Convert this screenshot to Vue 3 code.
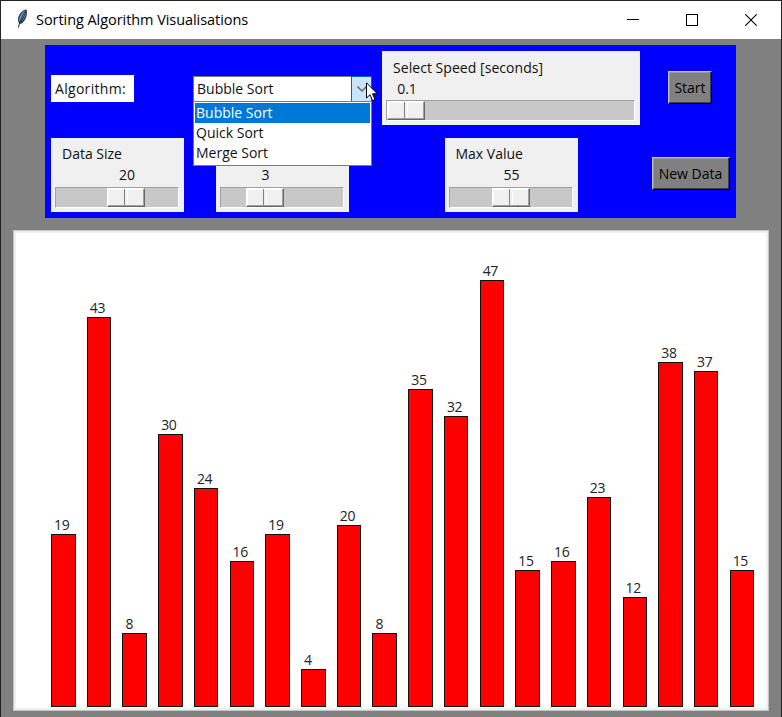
<script setup>
const values = [19, 43, 8, 30, 24, 16, 19, 4, 20, 8, 35, 32, 47, 15, 16, 23, 12, 38, 37, 15]
const unit = 9.045
const bars = values.map((value) => ({
  value,
  height: 707 - Math.round(705.5 - value * unit) + 'px',
}))
const algorithms = ['Bubble Sort', 'Quick Sort', 'Merge Sort']
const speed = { label: 'Select Speed [seconds]', value: '0.1', offset: '0px', cls: 'wide' }
const sliders = [
  { label: 'Data Size', value: '20', offset: '51px', cls: 'size' },
  { label: '', value: '3', offset: '25px', cls: 'min' },
  { label: 'Max Value', value: '55', offset: '42px', cls: 'max' },
]
</script>

<template>
  <div class="window">
    <header class="titlebar">
      <svg class="feather" width="13" height="20" viewBox="0 0 13 20">
        <path d="M3 19 L4.2 14.5 C2 11 3 7 6 3.5 C8 1.2 10 .3 11.5 .5 C12.5 3 12 8 9.5 11.5 C8 14 6.5 15 4.5 15 L3.5 19 Z" fill="#263d57" />
        <path d="M4.3 13.2 C3.4 9.5 5.2 6 9.2 1.8 L10.8 1.2 C9.6 5.3 7.5 10 4.3 13.2Z" fill="#7299c7" />
        <path d="M6 13.2 C9.5 10.5 11.3 6.5 11.3 2.7 C9.8 6.5 8 10.5 6 13.2Z" fill="#4b79ae" />
        <path d="M3.4 18.5 C4.6 12.8 7.2 6.5 10.9 1.2" fill="none" stroke="#182231" stroke-width=".8" />
      </svg>
      <h1>Sorting Algorithm Visualisations</h1>
      <div class="window-buttons">
        <svg width="12" height="12"><path d="M0 5.5H12" stroke="#000" /></svg>
        <svg width="12" height="12"><rect x=".5" y=".5" width="11" height="11" fill="none" stroke="#000" /></svg>
        <svg width="12" height="12"><path d="M.3 .3L11.7 11.7M11.7 .3L.3 11.7" stroke="#000" stroke-width="1.1" /></svg>
      </div>
    </header>

    <section class="controls">
      <div class="cell left"><label class="caption">Algorithm:</label></div>
      <div class="cell">
        <div class="combo">
          <span class="combo-text">Bubble Sort</span>
          <span class="combo-arrow">
            <svg width="12" height="8"><path d="M1.5 1.5L6 6L10.5 1.5" fill="none" stroke="#5a6570" stroke-width="1.4" /></svg>
          </span>
          <ul class="dropdown">
            <li v-for="(name, i) in algorithms" :key="name" :class="{ active: i === 0 }">{{ name }}</li>
          </ul>
          <svg class="cursor" width="13" height="20" viewBox="0 0 13 20">
            <path d="M.5 .8V16L4 12.7L6.5 18.6L9 17.5L6.5 11.8H11.3Z" fill="#fff" stroke="#000" />
          </svg>
        </div>
      </div>
      <div class="cell">
        <div class="scale" :class="speed.cls">
          <div class="scale-label">{{ speed.label }}</div>
          <div class="scale-value"><span :style="{ marginLeft: speed.offset }">{{ speed.value }}</span></div>
          <div class="trough"><div class="thumb" :style="{ marginLeft: speed.offset }"></div></div>
        </div>
      </div>
      <div class="cell"><button class="start">Start</button></div>

      <div v-for="s in sliders" :key="s.cls" class="cell" :class="{ left: s.cls === 'size' }">
        <div class="scale" :class="s.cls">
          <div class="scale-label">{{ s.label }}</div>
          <div class="scale-value"><span :style="{ marginLeft: s.offset }">{{ s.value }}</span></div>
          <div class="trough"><div class="thumb" :style="{ marginLeft: s.offset }"></div></div>
        </div>
      </div>
      <div class="cell"><button class="new-data">New Data</button></div>
    </section>

    <section class="canvas">
      <div v-for="(bar, i) in bars" :key="i" class="slot">
        <span class="bar-label">{{ bar.value }}</span>
        <div class="bar" :style="{ height: bar.height }"></div>
      </div>
    </section>
  </div>
</template>

<style>
body { margin: 0; background: #808080; }
</style>

<style scoped>
* { box-sizing: border-box; }
.window {
  width: 782px;
  height: 717px;
  border: 1px solid #242424;
  border-bottom: 0;
  background: #808080;
  color: #111;
  font-family: "Open Sans", "Noto Sans", sans-serif;
  font-size: 14px;
  overflow: hidden;
}
.titlebar {
  display: flex;
  align-items: center;
  height: 38px;
  padding: 0 24px 0 14px;
  background: #fff;
}
h1 {
  margin: -1px 0 0 8px;
  font-size: 14.5px;
  font-weight: 400;
  letter-spacing: -.06px;
  color: #000;
  white-space: nowrap;
}
.feather { display: block; margin-top: -2px; }
.window-buttons { display: flex; gap: 47px; margin-left: auto; }
.window-buttons svg { display: block; }
.controls {
  display: grid;
  grid-template-columns: 143px 188px 270px 90px;
  grid-template-rows: 86px 87px;
  width: 691px;
  height: 173px;
  margin: 6px 0 0 44px;
  background: #00f;
}
.cell { display: flex; align-items: center; justify-content: center; }
.cell.left { justify-content: flex-start; padding-left: 6px; }
.caption {
  width: 83px;
  height: 27px;
  padding-left: 4px;
  background: #fff;
  line-height: 27px;
  letter-spacing: .3px;
}
.combo {
  position: relative;
  display: flex;
  width: 179px;
  height: 26px;
  margin: 2px 0 0 1px;
  border: 1px solid #7a7a7a;
  background: #fff;
}
.combo-text { flex: 1; padding-left: 3px; line-height: 24px; }
.combo-arrow {
  display: flex;
  align-items: center;
  justify-content: center;
  width: 21px;
  margin: -1px;
  border: 1px solid #0067b8;
  background: #cce4f7;
}
.dropdown {
  position: absolute;
  z-index: 2;
  top: 24px;
  left: -1px;
  width: 179px;
  height: 65px;
  margin: 0;
  padding: 1px;
  border: 1px solid #7a7a7a;
  background: #fff;
  list-style: none;
}
.dropdown li { height: 20px; padding-left: 1px; line-height: 20px; }
.dropdown .active { background: #0078d7; color: #fff; }
.cursor { position: absolute; z-index: 3; left: 172px; top: 5px; }
.scale {
  width: 133px;
  height: 74px;
  padding: 5px 5px 4px 4px;
  background: #f0f0f0;
}
.scale.wide { width: 258px; }
.scale-label { height: 22px; padding-left: 7px; line-height: 22px; white-space: nowrap; }
.wide .scale-label { line-height: 24px; letter-spacing: .05px; }
.scale-value { height: 22px; padding-left: 2px; line-height: 20px; }
.wide .scale-value { line-height: 22px; }
.scale-value span { display: block; width: 38px; text-align: center; }
.trough {
  height: 21px;
  border: 1px solid;
  border-color: #a0a0a0 #fff #fff #a0a0a0;
  background: #c8c8c8;
}
.thumb {
  display: flex;
  justify-content: center;
  width: 38px;
  height: 19px;
  border: 1px solid;
  border-color: #fff #696969 #696969 #fff;
  background: #f0f0f0;
  box-shadow: inset -1px -1px #a0a0a0, inset 1px 1px #fff;
}
.thumb::before { content: ""; width: 2px; height: 16px; border-left: 1px solid #808080; border-right: 1px solid #fff; }
button {
  height: 33px;
  padding: 0;
  border: 1px solid;
  border-color: #c4c4c4 #000 #000 #c4c4c4;
  background: #808080;
  box-shadow: inset -1px -1px #404040, inset 1px 1px #999;
  color: #000;
  font: inherit;
}
.start { width: 44px; margin: -2px 2px 0 0; }
.new-data { width: 78px; margin: -2px 1px 0 0; }
.canvas {
  display: flex;
  align-items: flex-end;
  width: 756px;
  height: 481px;
  margin: 12px 0 0 12px;
  padding: 0 0 1px 35px;
  border: 1px solid #c4c4c4;
  background: #fff;
  box-shadow: inset 0 0 0 2px #f0f0f0;
}
.slot { display: flex; flex-direction: column; flex: 0 0 35.72px; padding: 0 0 2px 2px; }
.bar-label { height: 19px; padding-left: 3px; line-height: 19px; letter-spacing: -.3px; color: #222; }
.bar { width: 24.5px; border: 1px solid #111; background: #f00; }
</style>
